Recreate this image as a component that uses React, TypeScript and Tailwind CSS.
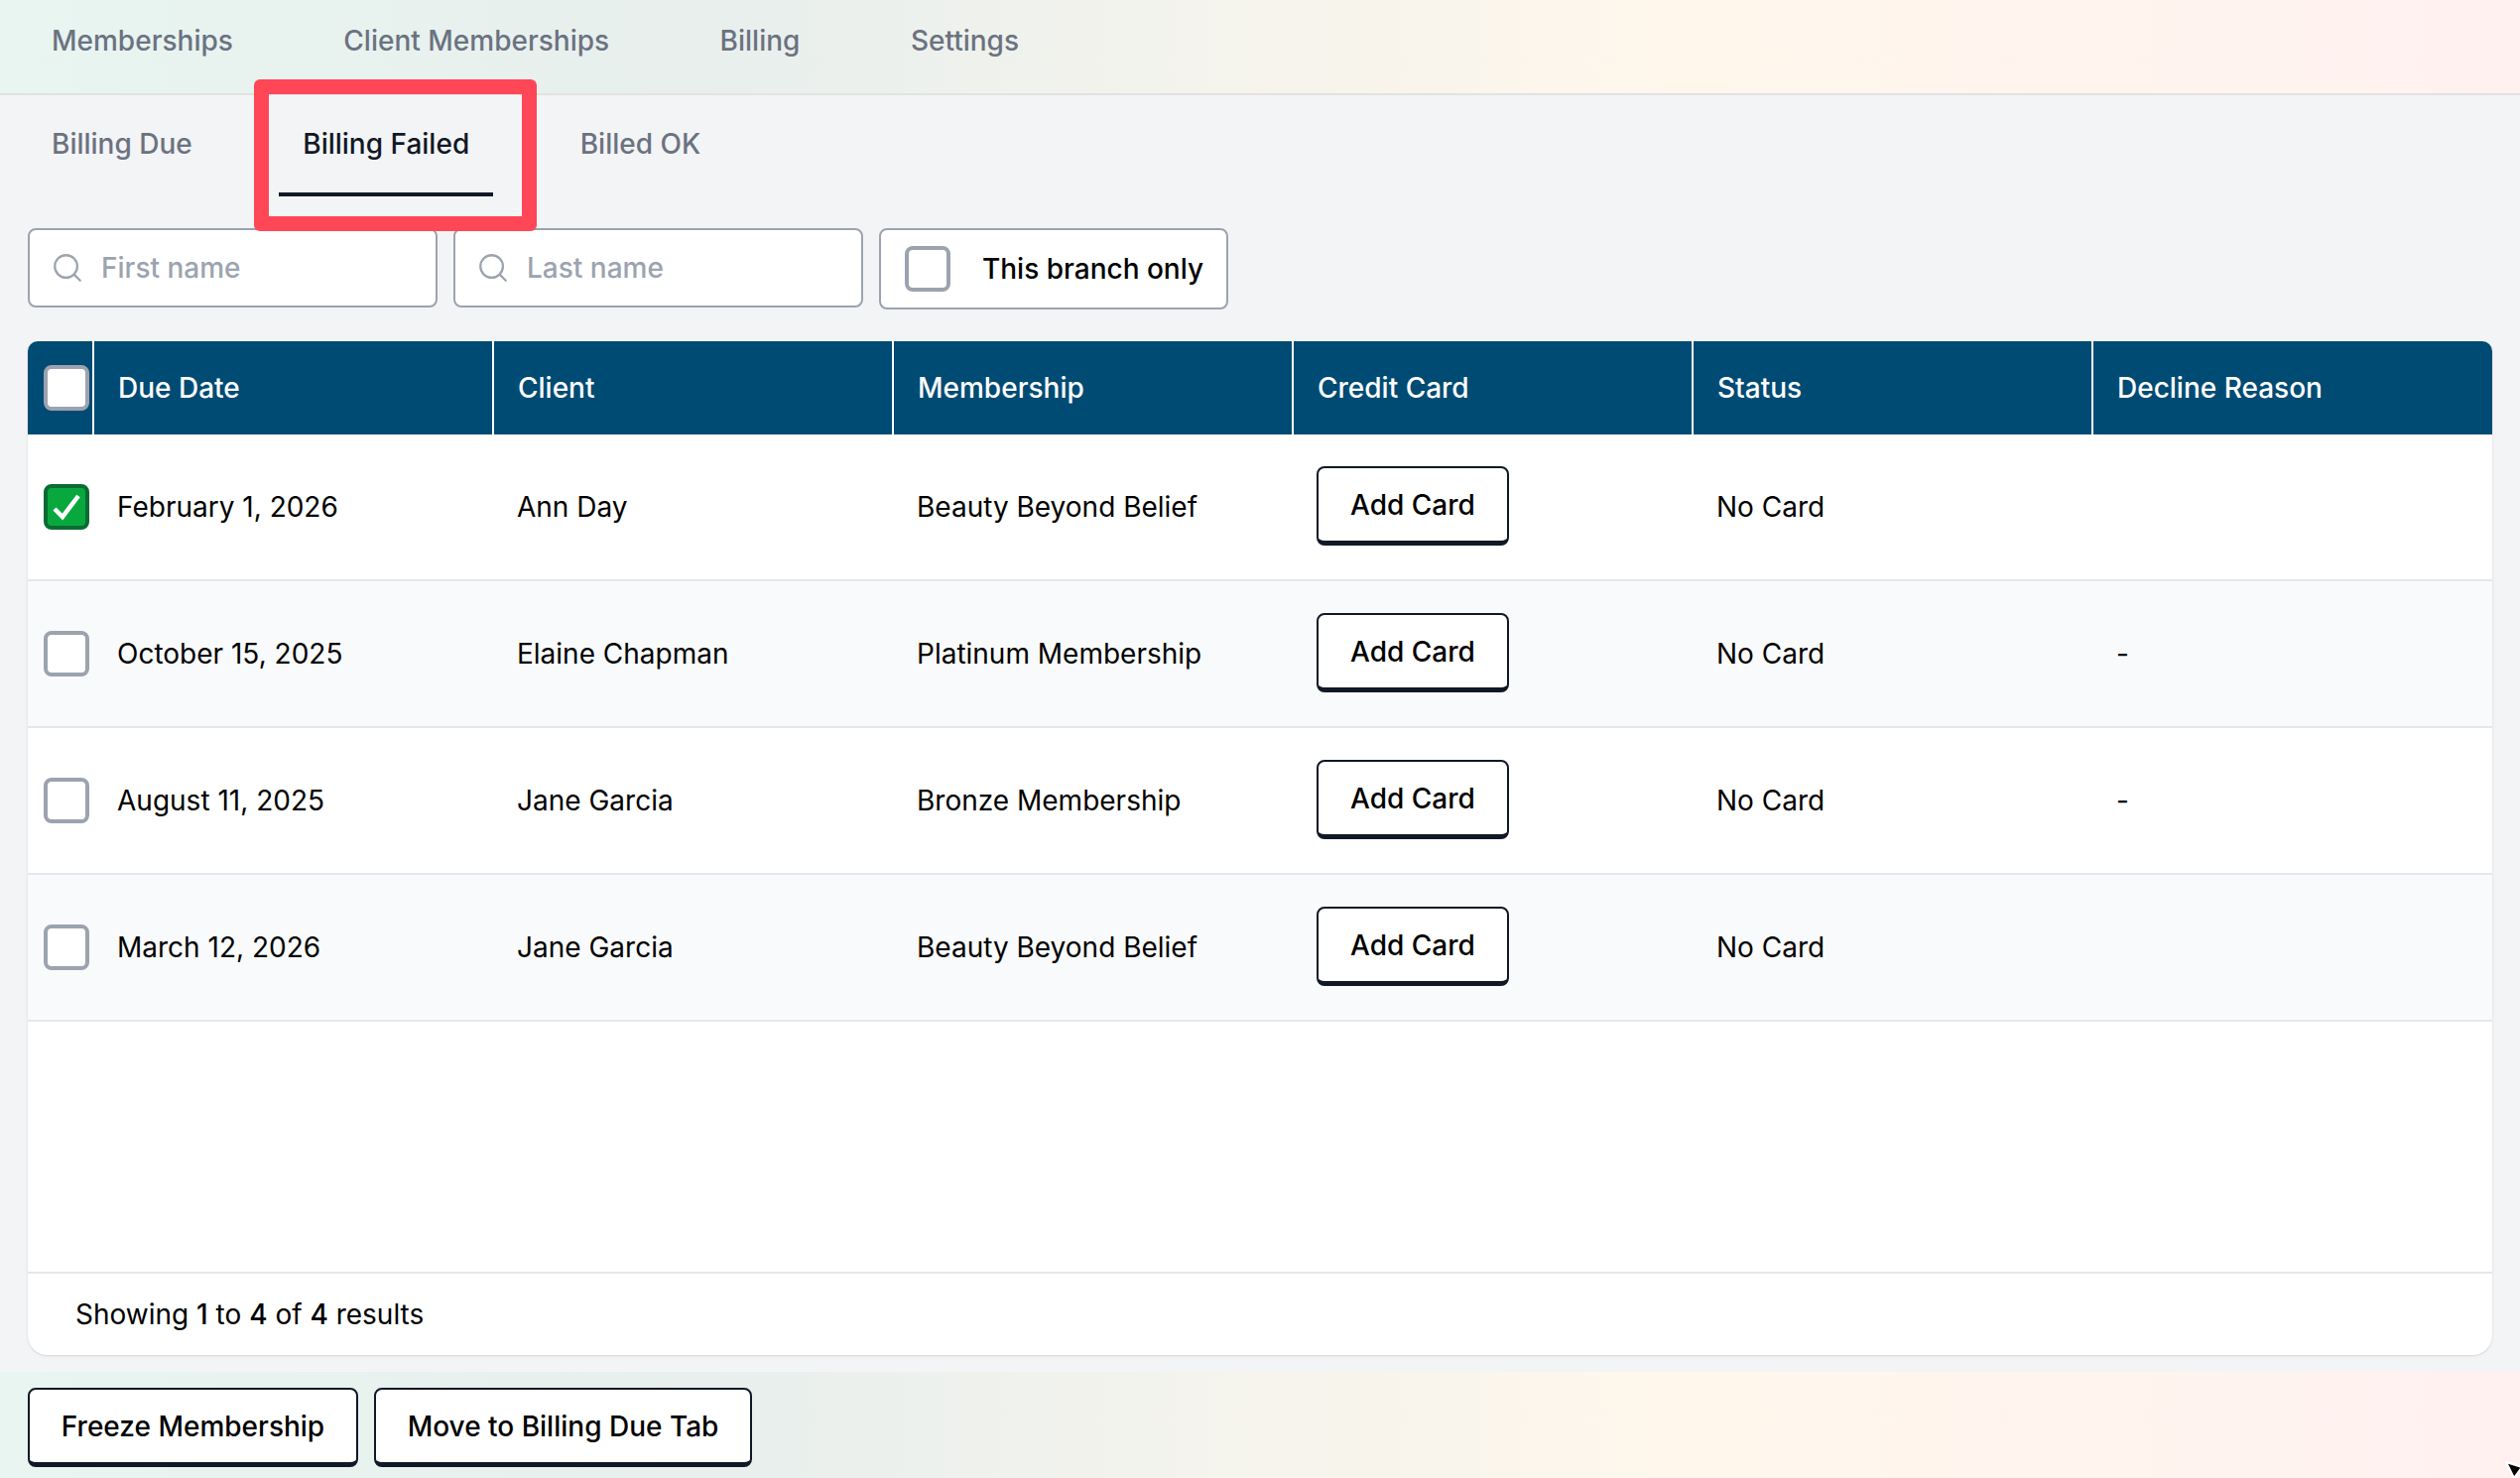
import { Search } from 'lucide-react'

const rows = [
  { date: 'February 1, 2026', client: 'Ann Day', membership: 'Beauty Beyond Belief', reason: '', checked: true },
  { date: 'October 15, 2025', client: 'Elaine Chapman', membership: 'Platinum Membership', reason: '-', checked: false },
  { date: 'August 11, 2025', client: 'Jane Garcia', membership: 'Bronze Membership', reason: '-', checked: false },
  { date: 'March 12, 2026', client: 'Jane Garcia', membership: 'Beauty Beyond Belief', reason: '', checked: false },
]

const columns = ['Due Date', 'Client', 'Membership', 'Credit Card', 'Status', 'Decline Reason']

function Box({ checked = false }: { checked?: boolean }) {
  return (
    <span
      className={
        checked
          ? 'w-[46px] h-[46px] rounded-lg border-4 border-[#0b6b33] bg-[#08a83e] flex items-center justify-center'
          : 'w-[46px] h-[46px] rounded-lg border-4 border-[#9ca3af] bg-white flex items-center justify-center'
      }
    >
      {checked && (
        <svg width="38" height="38" viewBox="0 0 38 38" fill="none" stroke="#fff" strokeWidth="4.5">
          <path d="M7 21 L15 29 L31 8" />
        </svg>
      )}
    </span>
  )
}

function ActionButton({ label, width }: { label: string; width: string }) {
  return (
    <button className={`${width} h-[80px] rounded-lg bg-white border-2 border-b-[5px] border-[#111827] text-[28px] font-medium text-black flex items-center justify-center`}>
      {label}
    </button>
  )
}

function SearchInput({ placeholder }: { placeholder: string }) {
  return (
    <div className="w-[413px] h-[80px] rounded-lg bg-white border-2 border-[#9ca3af] flex items-center pl-[21px] gap-[17px]">
      <Search size={34} strokeWidth={1.6} className="text-[#9ca3af]" />
      <span className="text-[28px] font-medium text-[#9ca3af]">{placeholder}</span>
    </div>
  )
}

export default function App() {
  return (
    <div className="relative w-[2540px] h-[1490px] overflow-hidden bg-[#f3f4f6] font-['Inter',sans-serif] flex flex-col">
      <nav className="h-[96px] shrink-0 border-b-2 border-[#e2e2e2] bg-[linear-gradient(90deg,#e8f5f1_0%,#e8efed_28%,#fff7ec_66%,#fff1f0_100%)] flex items-start pl-[28px] pt-[21px] gap-[63.5px] text-[28px] leading-[40px] font-medium text-[#6b7280]">
        <span className="px-6">Memberships</span>
        <span className="px-6">Client Memberships</span>
        <span className="px-6">Billing</span>
        <span className="px-6">Settings</span>
      </nav>

      <main className="flex-1 px-[28px] flex flex-col">
        <div className="flex gap-[63.5px] text-[28px] leading-[40px] font-medium text-[#6b7280]">
          <span className="px-6 pt-[29px] pb-[33px]">Billing Due</span>
          <span className="px-6 pt-[29px] pb-[29px] border-b-4 border-[#111827] text-[#111827]">Billing Failed</span>
          <span className="px-6 pt-[29px] pb-[33px]">Billed OK</span>
        </div>

        <div className="flex items-start gap-[16px] mt-[32px]">
          <SearchInput placeholder="First name" />
          <SearchInput placeholder="Last name" />
          <label className="w-[352px] h-[82px] rounded-lg bg-white border-2 border-[#9ca3af] flex items-center pl-[24px] gap-[32px] text-[28px] font-medium text-black">
            <Box />
            This branch only
          </label>
        </div>

        <div className="mt-[32px] h-[1022px] rounded-b-[20px] rounded-t-[10px] bg-white shadow flex flex-col overflow-hidden">
          <div className="grid grid-cols-[65px_repeat(5,403px)_1fr] h-[94px] bg-[#004b73] text-white text-[28px] font-[550]">
            <div className="flex items-center pl-[16px]"><Box /></div>
            {columns.map((c) => (
              <div key={c} className="flex items-center pl-[24px] border-l-2 border-white">{c}</div>
            ))}
          </div>

          <div className="flex-1 text-[28px] text-black">
            {rows.map((r, i) => (
              <div key={i} className={`grid grid-cols-[65px_repeat(5,403px)_1fr] h-[148px] border-b-2 border-[#e5e7eb] ${i % 2 ? 'bg-[#f9fafb]' : 'bg-white'}`}>
                <div className="flex items-center pl-[16px]"><Box checked={r.checked} /></div>
                <div className="flex items-center pl-[25px]">{r.date}</div>
                <div className="flex items-center pl-[25px]">{r.client}</div>
                <div className="flex items-center pl-[25px]">{r.membership}</div>
                <div className="flex items-center pl-[25px]">
                  <ActionButton label="Add Card" width="w-[194px] -mt-[2px]" />
                </div>
                <div className="flex items-center pl-[25px]">No Card</div>
                <div className="flex items-center pl-[25px]">{r.reason}</div>
              </div>
            ))}
          </div>

          <div className="h-[84px] shrink-0 border-t-2 border-[#e5e7eb] flex items-center pl-[48px] text-[28px] text-black">
            <span>Showing <span className="font-medium">1</span> to <span className="font-medium">4</span> of <span className="font-medium">4</span> results</span>
          </div>
        </div>
      </main>

      <footer className="h-[107px] shrink-0 bg-[linear-gradient(90deg,#e8f5f1_0%,#e8efed_28%,#fff7ec_66%,#fff1f0_100%)] flex items-start pl-[28px] pt-[16px] gap-[16px]">
        <ActionButton label="Freeze Membership" width="w-[333px]" />
        <ActionButton label="Move to Billing Due Tab" width="w-[381px]" />
      </footer>

      {/* annotation box drawn over the screenshot */}
      <div className="absolute left-[256px] top-[80px] w-[285px] h-[153px] rounded-md border-[15px] border-[#ff4757]" />

      <svg className="absolute left-[2524px] top-[1472px]" width="16" height="18" viewBox="0 0 16 18">
        <path d="M2 2 L18 7 L10 18 Z" fill="#000" stroke="#fff" strokeWidth="2" strokeLinejoin="round" />
      </svg>
    </div>
  )
}
